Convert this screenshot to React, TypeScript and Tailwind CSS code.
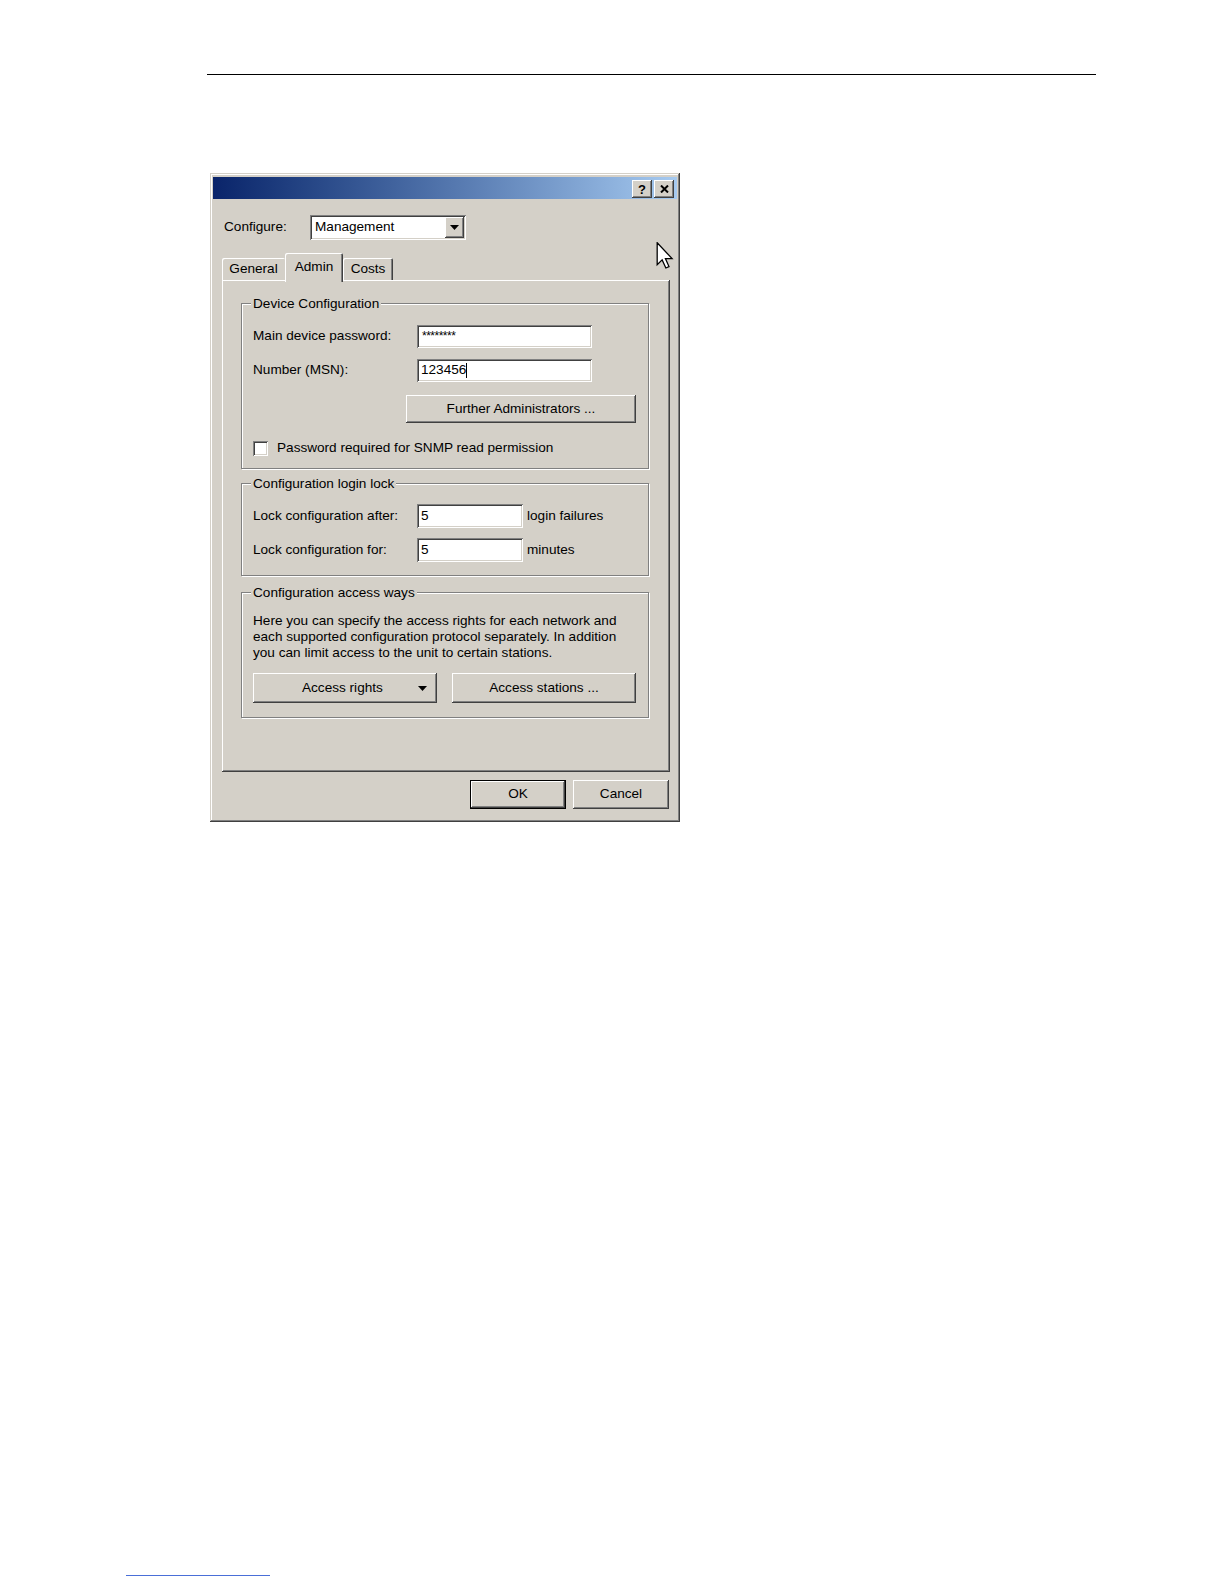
import React from "react";

const raised =
  "shadow-[inset_-1px_-1px_0_#404040,inset_1px_1px_0_#ffffff,inset_-2px_-2px_0_#808080,inset_2px_2px_0_#d4d0c8]";
const sunken =
  "shadow-[inset_1px_1px_0_#808080,inset_-1px_-1px_0_#ffffff,inset_2px_2px_0_#404040,inset_-2px_-2px_0_#d4d0c8]";
const etched = "border border-[#808080] shadow-[1px_1px_0_#ffffff,inset_1px_1px_0_#ffffff]";

function Btn({ w, h, children, def }: { w: string; h: string; children: React.ReactNode; def?: boolean }) {
  if (def) {
    return (
      <div className={`${w} ${h} border border-black bg-[#d4d0c8] flex`}>
        <div className={`flex-1 flex items-center justify-center ${raised}`}>{children}</div>
      </div>
    );
  }
  return <div className={`${w} ${h} bg-[#d4d0c8] flex items-center justify-center ${raised}`}>{children}</div>;
}

function Legend({ children }: { children: React.ReactNode }) {
  return (
    <span className="self-start -mt-[8px] -ml-[2px] px-[2px] leading-[16px] bg-[#d4d0c8] whitespace-nowrap">
      {children}
    </span>
  );
}

export default function App() {
  return (
    <div className="relative w-[1224px] h-[1584px] bg-white flex flex-col font-['Liberation_Sans',Arial,sans-serif] text-[13.6px] text-black">
      <div className="mt-[74px] ml-[207px] w-[889px] h-px bg-black" />

      {/* Dialog */}
      <div className="mt-[98px] ml-[210px] w-[470px] h-[649px] bg-[#d4d0c8] flex flex-col shadow-[inset_-1px_-1px_0_#404040,inset_1px_1px_0_#d4d0c8,inset_-2px_-2px_0_#808080,inset_2px_2px_0_#ffffff]">
        {/* Title bar */}
        <div className="mt-[4px] ml-[3px] mr-[3px] h-[22px] bg-gradient-to-r from-[#0a246a] to-[#a6caf0] flex justify-end items-start pt-[3px] pr-[3px] gap-[2px]">
          <div className={`w-[20px] h-[18px] bg-[#d4d0c8] flex items-center justify-center ${raised}`}>
            <span className="font-bold text-[13px] leading-none">?</span>
          </div>
          <div className={`w-[20px] h-[18px] bg-[#d4d0c8] flex items-center justify-center ${raised}`}>
            <svg width="9" height="8" viewBox="0 0 9 8">
              <path d="M1 0.5 L8 7.5 M8 0.5 L1 7.5" stroke="#000" strokeWidth="2" />
            </svg>
          </div>
        </div>

        {/* Configure row */}
        <div className="mt-[16px] ml-[14px] h-[25px] flex items-center">
          <span className="w-[86px]">Configure:</span>
          <div className={`w-[156px] h-[25px] bg-white flex items-center p-[2px] ${sunken}`}>
            <span className="flex-1 pl-[3px]">Management</span>
            <div className={`w-[19px] h-[21px] bg-[#d4d0c8] flex items-center justify-center ${raised}`}>
              <svg width="9" height="5" viewBox="0 0 9 5">
                <path d="M0 0 H9 L4.5 5 Z" fill="#000" />
              </svg>
            </div>
          </div>
        </div>

        {/* Tabs */}
        <div className="mt-[13px] ml-[12px] h-[27px] flex items-end">
          <div className="w-[63px] h-[22px] rounded-t-[2px] flex items-center justify-center pt-[1px] shadow-[inset_1px_1px_0_#ffffff]">
            General
          </div>
          <div className="relative z-10 w-[58px] h-[29px] -mb-[2px] bg-[#d4d0c8] rounded-t-[2px] flex items-start justify-center pt-[4px] shadow-[inset_1px_1px_0_#ffffff,inset_-1px_0_0_#404040,inset_-2px_0_0_#808080]">
            Admin
          </div>
          <div className="w-[50px] h-[22px] rounded-t-[2px] flex items-center justify-center pt-[1px] shadow-[inset_1px_1px_0_#ffffff,inset_-1px_0_0_#404040,inset_-2px_0_0_#808080]">
            Costs
          </div>
        </div>

        {/* Panel */}
        <div className="ml-[12px] w-[448px] h-[492px] flex flex-col shadow-[inset_-1px_-1px_0_#404040,inset_1px_1px_0_#ffffff,inset_-2px_-2px_0_#808080]">
          {/* Group 1 */}
          <div className={`mt-[23px] ml-[19px] w-[408px] flex flex-col pl-[11px] pb-[12px] ${etched}`}>
            <Legend>Device Configuration</Legend>
            <div className="mt-[13px] h-[23px] flex items-center">
              <span className="w-[164px]">Main device password:</span>
              <div className={`w-[175px] h-[23px] bg-white flex items-center pl-[5px] ${sunken}`}>
                <span className="text-[12px] tracking-[-0.5px] -mt-[2px]">********</span>
              </div>
            </div>
            <div className="mt-[11px] h-[23px] flex items-center">
              <span className="w-[164px]">Number (MSN):</span>
              <div className={`w-[175px] h-[23px] bg-white flex items-center pl-[4px] ${sunken}`}>
                <span>123456</span>
                <span className="w-px h-[15px] bg-black" />
              </div>
            </div>
            <div className="mt-[13px] ml-[153px]">
              <Btn w="w-[230px]" h="h-[28px]">Further Administrators ...</Btn>
            </div>
            <div className="mt-[17px] h-[16px] flex items-center">
              <div className={`w-[15px] h-[15px] bg-white ${sunken}`} />
              <span className="ml-[9px]">Password required for SNMP read permission</span>
            </div>
          </div>

          {/* Group 2 */}
          <div className={`mt-[14px] ml-[19px] w-[408px] flex flex-col pl-[11px] pb-[13px] ${etched}`}>
            <Legend>Configuration login lock</Legend>
            <div className="mt-[12px] h-[24px] flex items-center">
              <span className="w-[164px]">Lock configuration after:</span>
              <div className={`w-[106px] h-[24px] bg-white flex items-center pl-[4px] ${sunken}`}>5</div>
              <span className="ml-[4px]">login failures</span>
            </div>
            <div className="mt-[10px] h-[24px] flex items-center">
              <span className="w-[164px]">Lock configuration for:</span>
              <div className={`w-[106px] h-[24px] bg-white flex items-center pl-[4px] ${sunken}`}>5</div>
              <span className="ml-[4px]">minutes</span>
            </div>
          </div>

          {/* Group 3 */}
          <div className={`mt-[16px] ml-[19px] w-[408px] flex flex-col pl-[11px] pb-[14px] ${etched}`}>
            <Legend>Configuration access ways</Legend>
            <p className="mt-[12px] leading-[16px]">
              Here you can specify the access rights for each network and
              <br />
              each supported configuration protocol separately. In addition
              <br />
              you can limit access to the unit to certain stations.
            </p>
            <div className="mt-[12px] flex gap-[15px]">
              <div className={`w-[184px] h-[30px] bg-[#d4d0c8] flex items-center ${raised}`}>
                <span className="ml-[49px]">Access rights</span>
                <span className="ml-[35px] flex items-center pt-[1px]">
                  <svg width="9" height="5" viewBox="0 0 9 5">
                    <path d="M0 0 H9 L4.5 5 Z" fill="#000" />
                  </svg>
                </span>
              </div>
              <Btn w="w-[184px]" h="h-[30px]">Access stations ...</Btn>
            </div>
          </div>
        </div>

        {/* OK / Cancel */}
        <div className="mt-[8px] pr-[11px] flex justify-end gap-[7px]">
          <Btn w="w-[96px]" h="h-[29px]" def>
            OK
          </Btn>
          <Btn w="w-[96px]" h="h-[29px]">Cancel</Btn>
        </div>
      </div>

      <div className="mt-[753px] ml-[126px] w-[144px] h-px bg-[#4a6fd8]" />

      {/* Mouse pointer */}
      <svg className="absolute left-[656px] top-[242px]" width="18" height="27" viewBox="0 0 12 19">
        <path
          d="M0.5 0.5 L0.5 16 L4 12.6 L6.6 18.3 L8.8 17.3 L6.3 11.7 L11 11.7 Z"
          fill="#fff"
          stroke="#000"
          strokeWidth="0.9"
          strokeLinejoin="miter"
        />
      </svg>
    </div>
  );
}
